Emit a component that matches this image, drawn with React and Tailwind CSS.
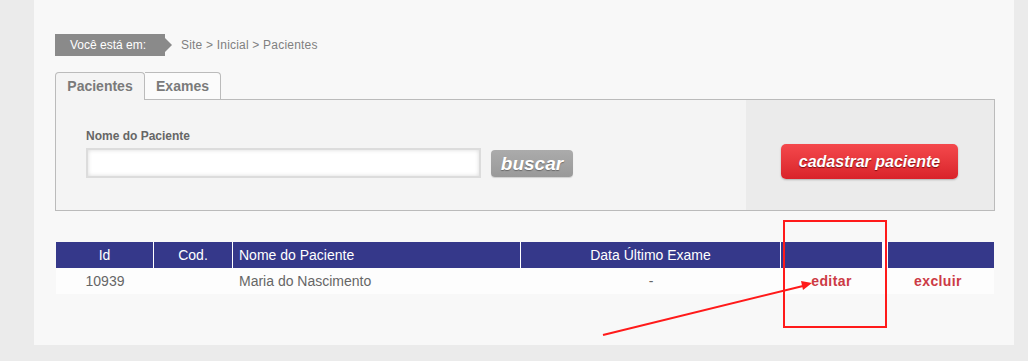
import React from "react";

const cols = "grid grid-cols-[98px_79px_288px_260px_107px_106px]";

function App() {
  return (
    <div className="relative w-[1028px] h-[361px] overflow-hidden bg-[#ebebeb] font-['Liberation_Sans',Arial,sans-serif]">
      <div className="ml-[34px] w-[980px] h-[345px] bg-[#f8f8f8] pt-[34px] pl-[21px]">

        {/* Breadcrumb */}
        <div className="flex items-center h-[22px]">
          <div className="relative h-[22px] w-[110px] bg-[#8a8a8a] text-white text-[12px] leading-[22px] pl-[15px]">
            Você está em:
            <span className="absolute -right-[7px] top-[4px] w-0 h-0 border-y-[7px] border-y-transparent border-l-[7px] border-l-[#8a8a8a]" />
          </div>
          <span className="ml-[16px] text-[12px] tracking-[0.2px] text-[#808080] whitespace-pre">Site &gt; Inicial &gt; Pacientes</span>
        </div>

        {/* Tabs */}
        <div className="flex mt-[15px] h-[28px] items-end">
          <div className="h-[28px] w-[90px] border border-[#bbbbbb] border-b-0 rounded-t-[4px] bg-[#f4f4f4] text-[14px] font-bold text-[#7a7a7a] text-center leading-[27px] relative z-10 -mb-px pb-px">
            Pacientes
          </div>
          <div className="h-[27px] w-[76px] border border-[#bbbbbb] border-l-0 border-b-0 rounded-tr-[4px] bg-[#fbfbfb] text-[14px] font-bold text-[#7a7a7a] text-center leading-[26px]">
            Exames
          </div>
        </div>

        {/* Search box */}
        <div className="flex w-[940px] h-[112px] border border-[#bbbbbb]">
          <div className="flex-1 bg-[#f4f4f4] pl-[30px] pt-[29px]">
            <div className="text-[12px] font-bold text-[#666666] leading-[14px]">Nome do Paciente</div>
            <div className="flex items-center mt-[5px]">
              <div className="w-[395px] h-[30px] bg-white border-2 border-[#dcdcdc] shadow-[inset_0_0_4px_rgba(0,0,0,0.15)]" />
              <button className="ml-[10px] w-[82px] h-[27px] rounded-[4px] bg-gradient-to-b from-[#ababab] to-[#999999] text-white italic font-bold text-[19px] leading-[27px] [text-shadow:0_1px_1px_rgba(0,0,0,0.35)] shadow-[0_1px_1px_rgba(0,0,0,0.15)]">
                buscar
              </button>
            </div>
          </div>
          <div className="w-[248px] bg-[#ebebeb] pt-[44px] pl-[35px]">
            <button className="w-[177px] h-[35px] rounded-[5px] bg-gradient-to-b from-[#f4484c] to-[#d9222a] text-white italic font-bold text-[16px] [text-shadow:0_1px_1px_rgba(80,0,0,0.7)] shadow-[0_1px_2px_rgba(0,0,0,0.25)]">
              cadastrar paciente
            </button>
          </div>
        </div>

        {/* Table */}
        <div className="ml-px mt-[31px] w-[938px]">
          <div className={`${cols} h-[26px] bg-[#35388a] text-white text-[14px] leading-[26px]`}>
            <div className="text-center border-r border-white">Id</div>
            <div className="text-center border-r border-white">Cod.</div>
            <div className="pl-[6px] border-r border-white">Nome do Paciente</div>
            <div className="text-center border-r border-white">Data Último Exame</div>
            <div className="border-r-[6px] border-white" />
            <div />
          </div>
          <div className={`${cols} h-[26px] bg-[#fdfdfd] text-[14px] leading-[26px] text-[#666666]`}>
            <div className="text-center">10939</div>
            <div />
            <div className="pl-[6px]">Maria do Nascimento</div>
            <div className="text-center">-</div>
            <div className="text-center font-bold text-[#cc3a45] tracking-[0.4px] pr-[6px]">editar</div>
            <div className="text-center font-bold text-[#cc3a45] tracking-[0.4px] pr-[6px]">excluir</div>
          </div>
        </div>
      </div>

      {/* Annotation overlay */}
      <svg className="absolute left-0 top-0 pointer-events-none" width="1028" height="361">
        <rect x="784" y="221" width="102" height="106" fill="none" stroke="#ff1a1a" strokeWidth="2" />
        <line x1="603" y1="335" x2="803" y2="286" stroke="#ff1a1a" strokeWidth="2" />
        <polygon points="812,283 801,281 803,290" fill="#ff1a1a" />
      </svg>
    </div>
  );
}

export default App;
